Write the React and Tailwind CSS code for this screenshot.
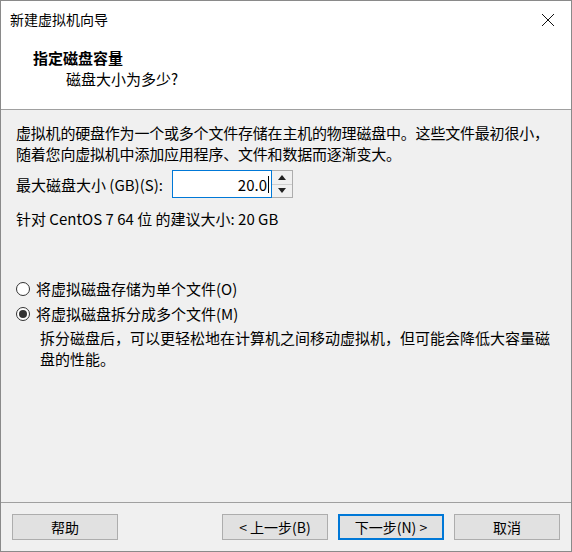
import React from "react";

function Radio({ checked, label }) {
  return (
    <div className="flex items-center h-[25px]">
      <span className="w-[14px] h-[14px] rounded-full border border-[#333] bg-white flex items-center justify-center">
        {checked && <span className="w-[8px] h-[8px] rounded-full bg-[#333]" />}
      </span>
      <span className="ml-[6px]">{label}</span>
    </div>
  );
}

function Btn({ children, focused }) {
  return (
    <button
      type="button"
      className={
        "w-[106px] h-[26px] bg-[#e1e1e1] text-[14px] text-black flex items-center justify-center " +
        (focused
          ? "border border-[#0078d7] shadow-[inset_0_0_0_1px_#0078d7]"
          : "border border-[#adadad]")
      }
    >
      {children}
    </button>
  );
}

export default function App() {
  return (
    <div className="w-[572px] h-[552px] border border-[#8a8a8a] bg-[#f0f0f0] flex flex-col text-black font-['Noto_Sans_CJK_SC',sans-serif]">
      {/* title bar */}
      <div className="h-[37px] bg-white flex items-center justify-between pl-[9px] pr-[16px] text-[14px]">
        <span>新建虚拟机向导</span>
        <svg width="14" height="14" viewBox="0 0 14 14" className="mr-[0px]">
          <path d="M1 1L13 13M13 1L1 13" stroke="#111" strokeWidth="1" />
        </svg>
      </div>

      {/* header */}
      <div className="bg-white h-[72px] border-b border-[#a0a0a0] pt-[9px] leading-[21px]">
        <div className="pl-[32px] text-[15px] font-bold">指定磁盘容量</div>
        <div className="pl-[65px] text-[15px]">磁盘大小为多少?</div>
      </div>

      {/* body */}
      <div className="flex-1 px-[15px] pt-[12px] text-[15px] leading-[21px]">
        <p className="tracking-[-0.2px]">
          虚拟机的硬盘作为一个或多个文件存储在主机的物理磁盘中。这些文件最初很小，
          <br />
          随着您向虚拟机中添加应用程序、文件和数据而逐渐变大。
        </p>

        <div className="flex items-center mt-[6px]">
          <label className="w-[156px]">最大磁盘大小 (GB)(S):</label>
          <div className="w-[100px] h-[28px] bg-white border border-[#0078d7] flex items-center justify-end pr-[2px]">
            <span>20.0</span>
            <span className="w-px h-[17px] bg-black ml-px" />
          </div>
          <div className="w-[21px] h-[28px] border border-[#adadad] border-l-0 flex flex-col bg-[#f0f0f0]">
            <div className="flex-1 flex items-center justify-center border-b border-[#cfcfcf]">
              <svg width="8" height="5" viewBox="0 0 8 5"><path d="M0 5L4 0L8 5Z" fill="#222" /></svg>
            </div>
            <div className="flex-1 flex items-center justify-center">
              <svg width="8" height="5" viewBox="0 0 8 5"><path d="M0 0L8 0L4 5Z" fill="#222" /></svg>
            </div>
          </div>
        </div>

        <p className="mt-[10px]">针对 CentOS 7 64 位 的建议大小: 20 GB</p>

        <div className="mt-[47px]">
          <Radio label="将虚拟磁盘存储为单个文件(O)" />
          <Radio checked label="将虚拟磁盘拆分成多个文件(M)" />
          <p className="pl-[24px] mt-[1px]">
            拆分磁盘后，可以更轻松地在计算机之间移动虚拟机，但可能会降低大容量磁
            <br />
            盘的性能。
          </p>
        </div>
      </div>

      {/* footer */}
      <div className="border-t border-[#a0a0a0] h-[49px] flex items-start pt-[11px] pl-[11px] pr-[11px]">
        <Btn>帮助</Btn>
        <div className="flex-1" />
        <div className="flex gap-[10px]">
          <Btn>&lt; 上一步(B)</Btn>
          <Btn focused>下一步(N) &gt;</Btn>
          <Btn>取消</Btn>
        </div>
      </div>
    </div>
  );
}
